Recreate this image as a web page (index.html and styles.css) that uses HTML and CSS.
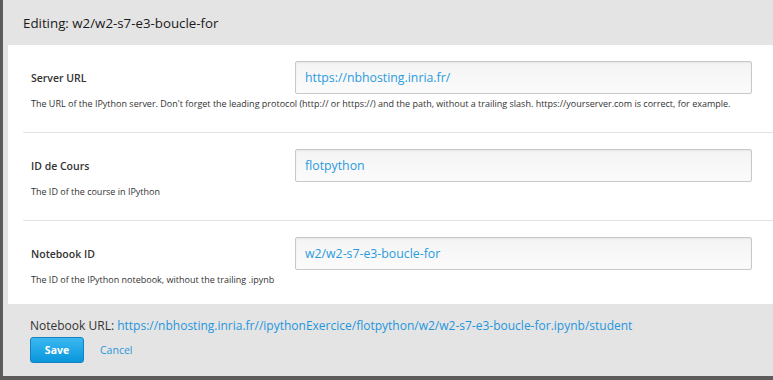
FILE: index.html
```html
<!DOCTYPE html>
<html>
<head>
<meta charset="utf-8">
<link rel="stylesheet" href="styles.css">
</head>
<body>
<div class="modal">
  <div class="header">Editing: w2/w2-s7-e3-boucle-for</div>
  <div class="content">
    <div class="row">
      <div class="line">
        <label class="label">Server URL</label>
        <div class="input">https://nbhosting.inria.fr/</div>
      </div>
      <div class="desc">The URL of the IPython server. Don't forget the leading protocol (http:// or https://) and the path, without a trailing slash. https://yourserver.com is correct, for example.</div>
    </div>
    <div class="row">
      <div class="line">
        <label class="label">ID de Cours</label>
        <div class="input">flotpython</div>
      </div>
      <div class="desc">The ID of the course in IPython</div>
    </div>
    <div class="row last">
      <div class="line">
        <label class="label">Notebook ID</label>
        <div class="input">w2/w2-s7-e3-boucle-for</div>
      </div>
      <div class="desc">The ID of the IPython notebook, without the trailing .ipynb</div>
    </div>
  </div>
  <div class="footer">
    <div class="url">Notebook URL: <a class="link">https://nbhosting.inria.fr//ipythonExercice/flotpython/w2/w2-s7-e3-boucle-for.ipynb/student</a></div>
    <div class="actions">
      <button class="save">Save</button>
      <a class="cancel">Cancel</a>
    </div>
  </div>
</div>
</body>
</html>
```
FILE: styles.css
```css
html, body {
  margin: 0;
  padding: 0;
  height: 380px;
  overflow: hidden;
  background: #5c5c5c;
  font-family: "Open Sans", "DejaVu Sans", sans-serif;
}
.modal {
  margin-left: 3px;
  height: 376px;
  background: #e4e4e4;
  display: flex;
  flex-direction: column;
}
.header {
  height: 45px;
  box-sizing: border-box;
  padding: 14px 0 0 20px;
  font-size: 13.3px;
  line-height: 18px;
  color: #1a1a1a;
}
.content {
  margin-left: 5px;
  background: #fff;
  height: 259px;
  padding-left: 15px;
}
.row {
  box-sizing: border-box;
  height: 88px;
  padding: 16px 0 0 8px;
  border-bottom: 1px solid #e3e3e3;
}
.row.last { height: 82px; border-bottom: none; }
.line {
  display: flex;
  align-items: center;
}
.label {
  width: 264px;
  font-size: 10.5px;
  font-weight: 600;
  color: #333;
}
.input {
  box-sizing: border-box;
  width: 457px;
  height: 33px;
  padding: 0 9px;
  border: 1px solid #c8c8c8;
  border-radius: 2px;
  background: linear-gradient(#f4f4f4, #fbfbfb);
  box-shadow: inset 0 1px 2px rgba(0,0,0,0.06);
  font-size: 12.3px;
  line-height: 31px;
  color: #2a9be0;
}
.desc {
  margin-top: 3px;
  font-size: 9px;
  line-height: 13px;
  color: #333;
}
.footer {
  padding: 14px 0 0 27px;
}
.url {
  font-size: 12px;
  line-height: 15px;
  color: #333;
}
.link { color: #1e96df; }
.actions {
  margin-top: 4px;
  display: flex;
  align-items: center;
  gap: 16px;
}
.save {
  box-sizing: border-box;
  width: 54px;
  height: 26px;
  margin: 0;
  border: 1px solid #1681bd;
  border-radius: 3px;
  background: linear-gradient(#3bb8f0, #0996dc);
  color: #fff;
  font-family: "Open Sans", sans-serif;
  font-weight: 700;
  font-size: 10.5px;
  padding: 0;
}
.cancel {
  font-size: 10.5px;
  color: #2a96dc;
}
```
